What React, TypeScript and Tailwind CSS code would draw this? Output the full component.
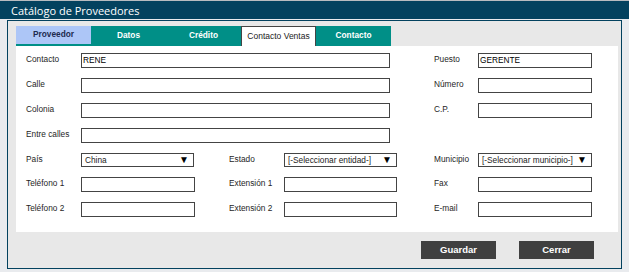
import React from 'react';

const tabs = [
    { label: 'Proveedor', kind: 'light' },
    { label: 'Datos', kind: 'teal' },
    { label: 'Crédito', kind: 'teal' },
    { label: 'Contacto Ventas', kind: 'active' },
    { label: 'Contacto', kind: 'teal' },
];

const Label = ({ text, w }: { text: string; w: string }) => (
    <div className={`${w} shrink-0 pt-[1px] text-[8.3px] leading-[10px] text-[#1e1e1e]`}>{text}</div>
);

const Field = ({ w, value = '' }: { w: string; value?: string }) => (
    <div className={`${w} h-[15px] shrink-0 border border-[#444] bg-white pl-[1px] text-[8.3px] leading-[13px] text-black`}>
        {value}
    </div>
);

const Select = ({ w, value }: { w: string; value: string }) => (
    <div className={`${w} h-[14px] shrink-0 border border-[#444] bg-white pl-[3px] pr-[4px] flex items-center justify-between text-[8.3px] text-[#222]`}>
        <span className="leading-[12px] whitespace-nowrap">{value}</span>
        <span className="text-[10px] leading-[12px] text-black">▼</span>
    </div>
);

export default function App() {
    return (
        <div className="w-[629px] h-[272px] bg-[#e9ebee] flex flex-col font-['Liberation_Sans',Arial,sans-serif] overflow-hidden">
            {/* Title bar */}
            <div className="h-[19px] border-t border-[#b8bcc0] bg-[#03425f] pl-[11px] flex items-center">
                <span className="font-['Open_Sans',sans-serif] text-[11px] text-white leading-none">Catálogo de Proveedores</span>
            </div>

            {/* Panel */}
            <div className="mx-[7px] mt-[1px] h-[249px] border border-[#03425f] bg-[#e8e8e8] pt-[5px] pl-[8px] pr-[7px] flex flex-col">
                {/* Tabs */}
                <div className="flex h-[20px]">
                    {tabs.map((t) => (
                        <div
                            key={t.label}
                            className={
                                t.kind === 'active'
                                    ? 'w-[75px] h-[20px] bg-white border border-b-0 border-[#444] flex items-center justify-center text-[8.5px] text-[#222]'
                                    : t.kind === 'light'
                                        ? 'w-[75px] h-[20px] bg-[#adc6f7] border-b-2 border-[#008f87] flex items-center justify-center text-[8.3px] font-bold text-[#1d2b4f]'
                                        : 'w-[75px] h-[20px] bg-[#008f87] flex items-center justify-center text-[8.3px] font-bold text-white'
                            }
                        >
                            <span className="leading-none -mt-[1px]">{t.label}</span>
                        </div>
                    ))}
                </div>

                {/* Form */}
                <div className="bg-white w-[602px] pt-[7px] pl-[10px] pb-[15px] flex flex-col gap-[10px]">
                    <div className="flex items-start">
                        <Label text="Contacto" w="w-[55px]" />
                        <Field w="w-[309px]" value="RENE" />
                        <div className="w-[44px] shrink-0" />
                        <Label text="Puesto" w="w-[44px]" />
                        <Field w="w-[114px]" value="GERENTE" />
                    </div>
                    <div className="flex items-start">
                        <Label text="Calle" w="w-[55px]" />
                        <Field w="w-[309px]" />
                        <div className="w-[44px] shrink-0" />
                        <Label text="Número" w="w-[44px]" />
                        <Field w="w-[114px]" />
                    </div>
                    <div className="flex items-start">
                        <Label text="Colonia" w="w-[55px]" />
                        <Field w="w-[309px]" />
                        <div className="w-[44px] shrink-0" />
                        <Label text="C.P." w="w-[44px]" />
                        <Field w="w-[114px]" />
                    </div>
                    <div className="flex items-start">
                        <Label text="Entre calles" w="w-[55px]" />
                        <Field w="w-[309px]" />
                    </div>
                    <div className="flex items-start">
                        <Label text="País" w="w-[55px]" />
                        <Select w="w-[113px]" value="China" />
                        <div className="w-[35px] shrink-0" />
                        <Label text="Estado" w="w-[55px]" />
                        <Select w="w-[113px]" value="[-Seleccionar entidad-]" />
                        <div className="w-[37px] shrink-0" />
                        <Label text="Municipio" w="w-[44px]" />
                        <Select w="w-[114px]" value="[-Seleccionar municipio-]" />
                    </div>
                    <div className="flex items-start">
                        <Label text="Teléfono 1" w="w-[55px]" />
                        <Field w="w-[114px]" />
                        <div className="w-[34px] shrink-0" />
                        <Label text="Extensión 1" w="w-[55px]" />
                        <Field w="w-[113px]" />
                        <div className="w-[37px] shrink-0" />
                        <Label text="Fax" w="w-[44px]" />
                        <Field w="w-[114px]" />
                    </div>
                    <div className="flex items-start">
                        <Label text="Teléfono 2" w="w-[55px]" />
                        <Field w="w-[114px]" />
                        <div className="w-[34px] shrink-0" />
                        <Label text="Extensión 2" w="w-[55px]" />
                        <Field w="w-[113px]" />
                        <div className="w-[37px] shrink-0" />
                        <Label text="E-mail" w="w-[44px]" />
                        <Field w="w-[114px]" />
                    </div>
                </div>

                {/* Buttons */}
                <div className="mt-[9px] w-[602px] pr-[24px] flex justify-end gap-[23px]">
                    <button className="w-[75px] h-[18px] bg-[#404040] text-white font-bold text-[9.5px] leading-none">Guardar</button>
                    <button className="w-[75px] h-[18px] bg-[#404040] text-white font-bold text-[9.5px] leading-none">Cerrar</button>
                </div>
            </div>
        </div>
    );
}
